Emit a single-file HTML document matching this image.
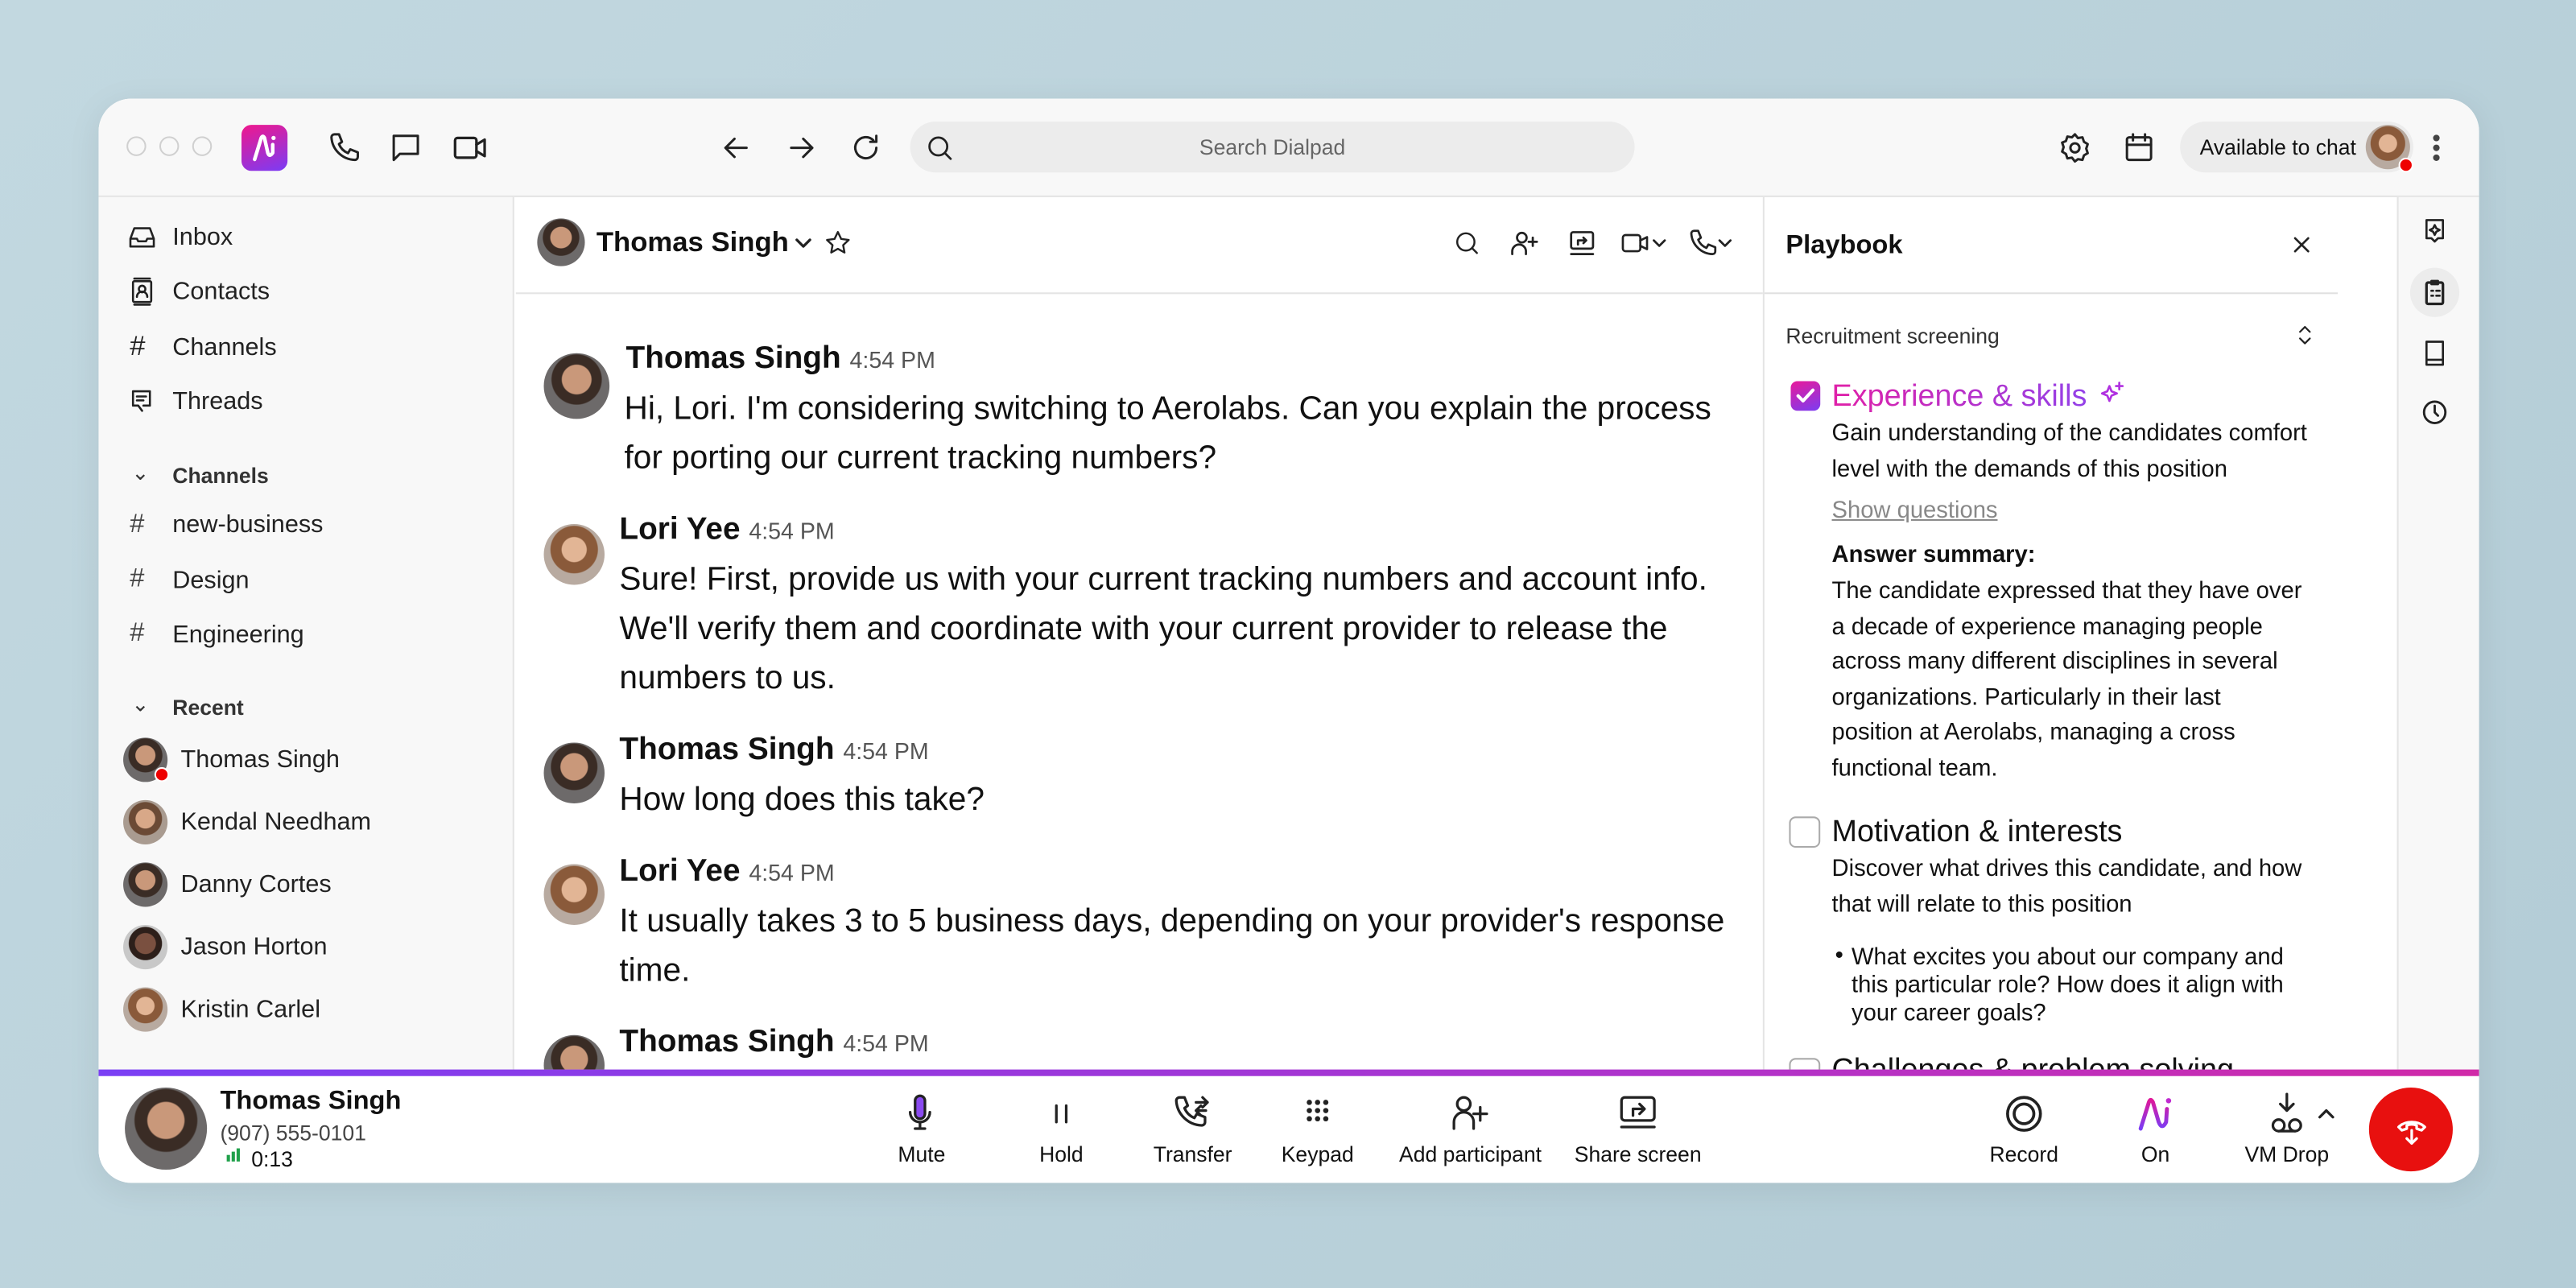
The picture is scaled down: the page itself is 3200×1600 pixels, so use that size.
<!DOCTYPE html>
<html><head><meta charset="utf-8"><style>
*{margin:0;padding:0;box-sizing:border-box}
html,body{width:3200px;height:1600px;overflow:hidden;background:#bcd4dd}
body{font-family:"Liberation Sans",sans-serif;color:#111}
.s{position:absolute;left:0;top:0;width:1568px;height:784px;transform:scale(2.040816);transform-origin:0 0;background:linear-gradient(135deg,#c2d8e0,#b3ccd6)}
.a{position:absolute;white-space:nowrap}
.win{position:absolute;left:60px;top:60px;width:1449px;height:660px;border-radius:20px;background:#fff;overflow:hidden;box-shadow:0 4px 20px rgba(0,0,0,.08)}
.av{position:absolute;border-radius:50%;background:radial-gradient(circle at 50% 40%,#c9987a 0 28%,#3a2c25 30% 48%,#6d6a6a 50%);}
.avf{background:radial-gradient(circle at 50% 42%,#e2b595 0 26%,#8a5a3a 28% 50%,#b8aaa0 52%)}
svg{position:absolute;fill:none;stroke:#222;stroke-width:1.6;stroke-linecap:round;stroke-linejoin:round}
.nav{font-size:15px;color:#222;line-height:18px}
.msg{font-size:19.9px;line-height:30px;color:#111}
.nm{font-size:19px;font-weight:bold}
.tm{font-size:14px;color:#555;font-weight:normal}
.pb{font-size:14.3px;line-height:21.5px;color:#111}
.lb{font-size:13px;color:#111;text-align:center;width:100px;margin-left:-50px}
</style></head><body><div class="s">
<div class="win">
 <div class="a" style="left:0;top:0;width:1449px;height:60px;background:#f8f8f8;border-bottom:1px solid #e4e4e4"></div>
 <div class="a" style="left:17px;top:23px;width:12px;height:12px;border:1px solid #d0d0d0;border-radius:50%"></div>
 <div class="a" style="left:37px;top:23px;width:12px;height:12px;border:1px solid #d0d0d0;border-radius:50%"></div>
 <div class="a" style="left:57px;top:23px;width:12px;height:12px;border:1px solid #d0d0d0;border-radius:50%"></div>
 <div class="a" style="left:87px;top:16px;width:28px;height:28px;border-radius:6px;background:linear-gradient(160deg,#f0188c,#7a3cf5)"></div>
 <svg style="left:87px;top:16px" width="28" height="28" viewBox="0 0 28 28"><path d="M8 21 L12 8 Q13 6 14 8 L16 17 Q17 20 19 17 L19 12" stroke="#fff" stroke-width="2.2"/><circle cx="19.5" cy="8" r="1.3" fill="#fff" stroke="none"/></svg>
 <svg style="left:139px;top:19px" width="22" height="22" viewBox="0 0 24 24"><path d="M5 3h3l2 5-2 1.5a11 11 0 0 0 6 6L15.5 13l5 2v3a2 2 0 0 1-2 2A16 16 0 0 1 3 5a2 2 0 0 1 2-2z"/></svg>
 <svg style="left:176px;top:19px" width="22" height="22" viewBox="0 0 24 24"><path d="M4 4h16v12H8l-4 4z"/></svg>
 <svg style="left:214px;top:19px" width="24" height="22" viewBox="0 0 24 22"><rect x="3" y="5" width="13" height="12" rx="1.5"/><path d="M16 9l5-3v10l-5-3"/></svg>
 <svg style="left:377px;top:19px" width="22" height="22" viewBox="0 0 24 24"><path d="M19 12H5M11 6l-6 6 6 6"/></svg>
 <svg style="left:417px;top:19px" width="22" height="22" viewBox="0 0 24 24"><path d="M5 12h14M13 6l6 6-6 6"/></svg>
 <svg style="left:456px;top:19px" width="22" height="22" viewBox="0 0 24 24"><path d="M19 12a7 7 0 1 1-2-5M19 4v4h-4"/></svg>
 <div class="a" style="left:494px;top:14px;width:441px;height:31px;border-radius:16px;background:#ececec"></div>
 <svg style="left:502px;top:20px" width="20" height="20" viewBox="0 0 24 24"><circle cx="11" cy="11" r="6.5"/><path d="M16 16l4 4"/></svg>
 <div class="a" style="left:494px;top:22px;width:441px;text-align:center;font-size:13px;color:#666">Search Dialpad</div>
 <svg style="left:1192px;top:19px" width="22" height="22" viewBox="0 0 24 24"><circle cx="12" cy="12" r="3"/><path d="M12 3l2 2.5 3-.5 1 3 2.5 1.5-1 3 1 3-2.5 1.5-1 3-3-.5L12 21l-2-2.5-3 .5-1-3-2.5-1.5 1-3-1-3L6 7.5l1-3 3 .5z"/></svg>
 <svg style="left:1231px;top:19px" width="22" height="22" viewBox="0 0 24 24"><rect x="4" y="5" width="16" height="15" rx="1.5"/><path d="M4 10h16M8 3v4M16 3v4"/></svg>
 <div class="a" style="left:1267px;top:14px;width:142px;height:31px;border-radius:16px;background:#ececec"></div>
 <div class="a" style="left:1279px;top:22px;font-size:13px;color:#111">Available to chat</div>
 <div class="av avf" style="left:1380px;top:16px;width:27px;height:27px"></div>
 <div class="a" style="left:1400px;top:36px;width:9px;height:9px;border-radius:50%;background:#e00;border:1px solid #fff"></div>
 <div class="a" style="left:1421px;top:22px;width:4px;height:4px;border-radius:50%;background:#444;box-shadow:0 6px 0 #444,0 12px 0 #444"></div>

 <div class="a" style="left:0;top:60px;width:253px;height:531px;background:#f8f8f8;border-right:1px solid #e4e4e4"></div>
 <svg style="left:17px;top:75px" width="19" height="19" viewBox="0 0 24 24"><path d="M3 13l3-8h12l3 8v6H3zM3 13h5l1 2h6l1-2h5"/></svg>
 <div class="a nav" style="left:45px;top:76px">Inbox</div>
 <svg style="left:17px;top:108px" width="19" height="19" viewBox="0 0 24 24"><rect x="5" y="4" width="14" height="16" rx="1"/><circle cx="12" cy="10" r="2.5"/><path d="M8 16a4 4 0 0 1 8 0M6 2h12M6 22h12"/></svg>
 <div class="a nav" style="left:45px;top:109px">Contacts</div>
 <div class="a nav" style="left:19px;top:142px;font-size:17px">#</div>
 <div class="a nav" style="left:45px;top:143px">Channels</div>
 <svg style="left:17px;top:175px" width="19" height="19" viewBox="0 0 24 24"><path d="M5 4h13v11h-5M5 4v11h4l3 4M8 8h7M8 11h5"/></svg>
 <div class="a nav" style="left:45px;top:176px">Threads</div>
 <div class="a" style="left:20px;top:220px;font-size:13px;color:#333">⌄</div>
 <div class="a nav" style="left:45px;top:221px;font-size:13px;font-weight:bold;color:#333">Channels</div>
 <div class="a nav" style="left:19px;top:251px;font-size:16px;color:#444">#</div><div class="a nav" style="left:45px;top:251px">new-business</div>
 <div class="a nav" style="left:19px;top:284px;font-size:16px;color:#444">#</div><div class="a nav" style="left:45px;top:285px">Design</div>
 <div class="a nav" style="left:19px;top:317px;font-size:16px;color:#444">#</div><div class="a nav" style="left:45px;top:318px">Engineering</div>
 <div class="a" style="left:20px;top:361px;font-size:13px;color:#333">⌄</div>
 <div class="a nav" style="left:45px;top:362px;font-size:13px;font-weight:bold;color:#333">Recent</div>
 <div class="av" style="left:15px;top:389px;width:27px;height:27px"></div>
 <div class="a" style="left:34px;top:407px;width:9px;height:9px;border-radius:50%;background:#e00;border:1px solid #fff"></div>
 <div class="a nav" style="left:50px;top:394px">Thomas Singh</div>
 <div class="av" style="left:15px;top:427px;width:27px;height:27px;background:radial-gradient(circle at 50% 42%,#d8a888 0 28%,#6b4a35 30% 48%,#a99b90 50%)"></div>
 <div class="a nav" style="left:50px;top:432px">Kendal Needham</div>
 <div class="av" style="left:15px;top:465px;width:27px;height:27px"></div>
 <div class="a nav" style="left:50px;top:470px">Danny Cortes</div>
 <div class="av" style="left:15px;top:503px;width:27px;height:27px;background:radial-gradient(circle at 50% 42%,#7a5040 0 30%,#2d1f1a 32% 48%,#c8c8c8 50%)"></div>
 <div class="a nav" style="left:50px;top:508px">Jason Horton</div>
 <div class="av avf" style="left:15px;top:541px;width:27px;height:27px"></div>
 <div class="a nav" style="left:50px;top:546px">Kristin Carlel</div>

 <div class="a" style="left:254px;top:118px;width:759px;height:1px;background:#e4e4e4"></div>
 <div class="av" style="left:267px;top:73px;width:29px;height:29px"></div>
 <div class="a" style="left:303px;top:78px;font-size:17px;font-weight:bold">Thomas Singh</div>
 <svg style="left:423px;top:82px" width="12" height="12" viewBox="0 0 12 12"><path d="M2 4l4 4 4-4"/></svg>
 <svg style="left:441px;top:79px" width="18" height="18" viewBox="0 0 24 24"><path d="M12 3l2.7 5.6 6.1.8-4.5 4.2 1.1 6-5.4-3-5.4 3 1.1-6L3.2 9.4l6.1-.8z"/></svg>
 <svg style="left:824px;top:79px" width="18" height="18" viewBox="0 0 24 24"><circle cx="11" cy="11" r="7"/><path d="M16 16l4 4"/></svg>
 <svg style="left:858px;top:78px" width="20" height="20" viewBox="0 0 24 24"><circle cx="10" cy="8" r="3.5"/><path d="M3 20v-2a5 5 0 0 1 10-0v2M18 8v6M15 11h6"/></svg>
 <svg style="left:893px;top:78px" width="20" height="20" viewBox="0 0 24 24"><rect x="4" y="4" width="16" height="12" rx="1.5"/><path d="M4 20h16M9 13v-3h6M13 8l2 2-2 2"/></svg>
 <svg style="left:926px;top:79px" width="20" height="18" viewBox="0 0 24 22"><rect x="2" y="5" width="13" height="12" rx="2"/><path d="M15 9l5-2.5v9L15 13"/></svg>
 <svg style="left:945px;top:83px" width="10" height="10" viewBox="0 0 12 12"><path d="M2 4l4 4 4-4"/></svg>
 <svg style="left:967px;top:78px" width="20" height="20" viewBox="0 0 24 24"><path d="M5 3h3l2 5-2 1.5a11 11 0 0 0 6 6L15.5 13l5 2v3a2 2 0 0 1-2 2A16 16 0 0 1 3 5a2 2 0 0 1 2-2z"/></svg>
 <svg style="left:985px;top:83px" width="10" height="10" viewBox="0 0 12 12"><path d="M2 4l4 4 4-4"/></svg>

 <div class="av" style="left:271px;top:155px;width:40px;height:40px"></div>
 <div class="a nm" style="left:321px;top:148px">Thomas Singh <span class="tm">4:54 PM</span></div>
 <div class="a msg" style="left:320px;top:174px">Hi, Lori. I'm considering switching to Aerolabs. Can you explain the process<br>for porting our current tracking numbers?</div>
 <div class="av avf" style="left:271px;top:259px;width:37px;height:37px"></div>
 <div class="a nm" style="left:317px;top:252px">Lori Yee <span class="tm">4:54 PM</span></div>
 <div class="a msg" style="left:317px;top:278px">Sure! First, provide us with your current tracking numbers and account info.<br>We'll verify them and coordinate with your current provider to release the<br>numbers to us.</div>
 <div class="a nm" style="left:317px;top:386px">Thomas Singh <span class="tm">4:54 PM</span></div>
 <div class="av" style="left:271px;top:392px;width:37px;height:37px"></div>
 <div class="a msg" style="left:317px;top:412px">How long does this take?</div>
 <div class="av avf" style="left:271px;top:466px;width:37px;height:37px"></div>
 <div class="a nm" style="left:317px;top:460px">Lori Yee <span class="tm">4:54 PM</span></div>
 <div class="a msg" style="left:317px;top:486px">It usually takes 3 to 5 business days, depending on your provider's response<br>time.</div>
 <div class="av" style="left:271px;top:570px;width:37px;height:37px"></div>
 <div class="a nm" style="left:317px;top:564px">Thomas Singh <span class="tm">4:54 PM</span></div>

 <div class="a" style="left:1013px;top:60px;width:1px;height:531px;background:#e4e4e4"></div>
 <div class="a" style="left:1014px;top:118px;width:349px;height:1px;background:#e0e0e0"></div>
 <div class="a" style="left:1027px;top:81px;font-size:16px;font-weight:bold">Playbook</div>
 <svg style="left:1335px;top:83px" width="12" height="12" viewBox="0 0 12 12"><path d="M2 2l8 8M10 2l-8 8" stroke-width="1.3"/></svg>
 <div class="a" style="left:1027px;top:137px;font-size:13px;color:#333">Recruitment screening</div>
 <svg style="left:1338px;top:137px" width="10" height="14" viewBox="0 0 10 14"><path d="M2 5l3-3 3 3M2 9l3 3 3-3" stroke-width="1.1"/></svg>
 <div class="a" style="left:1030px;top:172px;width:18px;height:18px;border-radius:4px;background:linear-gradient(160deg,#e91a9a,#7b3cf2)"></div>
 <svg style="left:1030px;top:172px" width="18" height="18" viewBox="0 0 18 18"><path d="M4.5 9l3 3 6-6.5" stroke="#fff" stroke-width="2"/></svg>
 <div class="a" style="left:1055px;top:170px;font-size:18.5px;background:linear-gradient(90deg,#e020a8,#9340e8);-webkit-background-clip:text;background-clip:text;color:transparent">Experience &amp; skills</div>
 <svg style="left:1218px;top:172px" width="16" height="16" viewBox="0 0 16 16"><path d="M6 3l1.3 3.2L10.5 7.5 7.3 8.8 6 12 4.7 8.8 1.5 7.5 4.7 6.2z M12 1v4M10 3h4" stroke="#b030e0" stroke-width="1.3"/></svg>
 <div class="a pb" style="left:1055px;top:194px">Gain understanding of the candidates comfort<br>level with the demands of this position</div>
 <div class="a pb" style="left:1055px;top:241px;color:#888;text-decoration:underline">Show questions</div>
 <div class="a pb" style="left:1055px;top:268px;font-weight:bold">Answer summary:</div>
 <div class="a pb" style="left:1055px;top:290px">The candidate expressed that they have over<br>a decade of experience managing people<br>across many different disciplines in several<br>organizations. Particularly in their last<br>position at Aerolabs, managing a cross<br>functional team.</div>
 <div class="a" style="left:1029px;top:437px;width:19px;height:19px;border-radius:4px;border:1.5px solid #aaa"></div>
 <div class="a" style="left:1055px;top:435px;font-size:18.5px">Motivation &amp; interests</div>
 <div class="a pb" style="left:1055px;top:459px">Discover what drives this candidate, and how<br>that will relate to this position</div>
 <div class="a pb" style="left:1057px;top:514px;line-height:17px">•</div>
 <div class="a pb" style="left:1067px;top:515px;line-height:17px">What excites you about our company and<br>this particular role? How does it align with<br>your career goals?</div>
 <div class="a" style="left:1029px;top:584px;width:19px;height:19px;border-radius:4px;border:1.5px solid #aaa"></div>
 <div class="a" style="left:1055px;top:580px;font-size:18.5px">Challenges &amp; problem solving</div>

 <div class="a" style="left:1399px;top:60px;width:50px;height:531px;background:#f8f8f8;border-left:1px solid #e4e4e4"></div>
 <svg style="left:1414px;top:72px" width="16" height="18" viewBox="0 0 16 18"><path d="M3 2h10v11H10l-2 2-2-2H3zM8 5l1 2 2 1-2 1-1 2-1-2-2-1 2-1z" stroke-width="1.3"/></svg>
 <div class="a" style="left:1407px;top:103px;width:30px;height:30px;border-radius:50%;background:#ececec"></div>
 <svg style="left:1414px;top:109px" width="16" height="18" viewBox="0 0 16 18"><rect x="3" y="3" width="10" height="13" rx="1"/><path d="M6 2h4v2H6zM6 8h1M9 8h2M6 11h1M9 11h2" stroke-width="1.3"/></svg>
 <svg style="left:1414px;top:146px" width="16" height="18" viewBox="0 0 16 18"><path d="M3 2h10v14H3zM3 13h10" stroke-width="1.3"/></svg>
 <svg style="left:1413px;top:182px" width="18" height="18" viewBox="0 0 18 18"><circle cx="9" cy="9" r="6.5" stroke-width="1.4"/><path d="M9 5v4l2 2" stroke-width="1.4"/></svg>

 <div class="a" style="left:0;top:591px;width:1449px;height:69px;background:#fff"></div>
 <div class="a" style="left:0;top:591px;width:1449px;height:4px;background:linear-gradient(90deg,#7a3ff4,#b333c8 70%,#d02aa8)"></div>
 <div class="av" style="left:16px;top:602px;width:50px;height:50px"></div>
 <div class="a" style="left:74px;top:602px;font-size:16px;font-weight:bold">Thomas Singh</div>
 <div class="a" style="left:74px;top:622px;font-size:13px;color:#444">(907) 555-0101</div>
 <div class="a" style="left:78px;top:643px;width:2px;height:4px;background:#1fa04a"></div>
 <div class="a" style="left:81px;top:641px;width:2px;height:6px;background:#1fa04a"></div>
 <div class="a" style="left:84px;top:639px;width:2px;height:8px;background:#1fa04a"></div>
 <div class="a" style="left:93px;top:638px;font-size:13px">0:13</div>

 <div class="a" style="left:497px;top:607px;width:6px;height:14px;border-radius:3px;background:#8a4af0"></div>
 <svg style="left:490px;top:605px" width="20" height="24" viewBox="0 0 20 24"><rect x="7" y="2" width="6" height="14" rx="3"/><path d="M4 12a6 6 0 0 0 12 0M10 18v4M7 22h6"/></svg>
 <div class="a lb" style="left:501px;top:635px">Mute</div>
 <svg style="left:576px;top:608px" width="20" height="20" viewBox="0 0 20 20"><path d="M7 5v10M13 5v10"/></svg>
 <div class="a lb" style="left:586px;top:635px">Hold</div>
 <svg style="left:654px;top:605px" width="24" height="24" viewBox="0 0 24 24"><path d="M4 3h3l2 5-2 1.5a11 11 0 0 0 6 6L14.5 13l5 2v3a2 2 0 0 1-2 2A16 16 0 0 1 2 5a2 2 0 0 1 2-2zM14 6h7M18 3l3 3-3 3M20 11h-6M17 8l-3 3 3 3"/></svg>
 <div class="a lb" style="left:666px;top:635px">Transfer</div>
 <svg style="left:732px;top:607px" width="20" height="20" viewBox="0 0 20 20"><g fill="#222" stroke="none"><circle cx="5" cy="4" r="1.6"/><circle cx="10" cy="4" r="1.6"/><circle cx="15" cy="4" r="1.6"/><circle cx="5" cy="9" r="1.6"/><circle cx="10" cy="9" r="1.6"/><circle cx="15" cy="9" r="1.6"/><circle cx="5" cy="14" r="1.6"/><circle cx="10" cy="14" r="1.6"/><circle cx="15" cy="14" r="1.6"/></g></svg>
 <div class="a lb" style="left:742px;top:635px">Keypad</div>
 <svg style="left:822px;top:605px" width="24" height="24" viewBox="0 0 24 24"><circle cx="9" cy="7" r="4"/><path d="M3 22v-4a6 6 0 0 1 12 0v4M19 9v8M15 13h8"/></svg>
 <div class="a lb" style="left:835px;top:635px">Add participant</div>
 <svg style="left:924px;top:605px" width="26" height="24" viewBox="0 0 26 24"><rect x="3" y="3" width="20" height="14" rx="2"/><path d="M3 21h20M10 14v-4h6M14 7l3 3-3 3"/></svg>
 <div class="a lb" style="left:937px;top:635px">Share screen</div>
 <svg style="left:1160px;top:606px" width="24" height="24" viewBox="0 0 24 24"><circle cx="12" cy="12" r="10" stroke-width="1.8"/><circle cx="12" cy="12" r="6" stroke-width="1.8"/></svg>
 <div class="a lb" style="left:1172px;top:635px">Record</div>
 <svg style="left:1240px;top:606px" width="26" height="24" viewBox="0 0 26 24"><defs><linearGradient id="g" x1="0" y1="0" x2="0" y2="1"><stop offset="0" stop-color="#e0189a"/><stop offset="1" stop-color="#7a3cf5"/></linearGradient></defs><path d="M3 21L8 5Q9 2 10.5 5L14 17Q16 22 18.5 17L19 9" stroke="url(#g)" stroke-width="2.4"/><circle cx="20" cy="4" r="1.6" fill="#c02ad0" stroke="none"/></svg>
 <div class="a lb" style="left:1252px;top:635px">On</div>
 <svg style="left:1320px;top:604px" width="24" height="28" viewBox="0 0 24 28"><path d="M12 2v10M8 8l4 4 4-4"/><circle cx="7" cy="21" r="3.5"/><circle cx="17" cy="21" r="3.5"/><path d="M7 24.5h10"/></svg>
 <svg style="left:1350px;top:613px" width="12" height="10" viewBox="0 0 12 10"><path d="M2 7l4-4 4 4"/></svg>
 <div class="a lb" style="left:1332px;top:635px">VM Drop</div>
 <div class="a" style="left:1382px;top:602px;width:51px;height:51px;border-radius:50%;background:#e8100f"></div>
 <svg style="left:1396px;top:616px" width="24" height="24" viewBox="0 0 24 24"><path d="M4 10c4-4 12-4 16 0l-2 2-3-1v-2a8 8 0 0 0-6 0v2l-3 1zM12 12v8M9 17l3 3 3-3" stroke="#fff" stroke-width="1.6"/></svg>
</div>
</div></body></html>
